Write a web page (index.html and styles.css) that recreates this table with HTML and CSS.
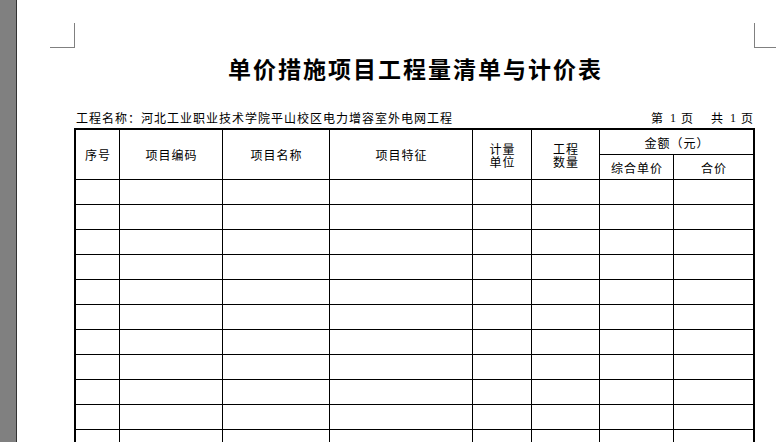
FILE: index.html
```html
<!DOCTYPE html>
<html lang="zh-CN">
<head>
<meta charset="utf-8">
<title>单价措施项目工程量清单与计价表</title>
<link rel="stylesheet" href="styles.css">
</head>
<body>
<div class="app">
  <div class="gutter"></div>
  <div class="page">
    <div class="mark mark-left"></div>
    <div class="mark mark-right"></div>
    <div class="sheet">
      <h1 class="title">单价措施项目工程量清单与计价表</h1>
      <div class="info">
        <span class="project">工程名称：河北工业职业技术学院平山校区电力增容室外电网工程</span>
        <span class="pager">第<span class="num">1</span>页<span class="sp"></span>共<span class="num">1</span>页</span>
      </div>
      <div class="grid">
        <div class="c h span2">序号</div>
        <div class="c h span2">项目编码</div>
        <div class="c h span2">项目名称</div>
        <div class="c h span2">项目特征</div>
        <div class="c h span2 two">计量<br>单位</div>
        <div class="c h span2 two">工程<br>数量</div>
        <div class="c h wide e">金额（元）</div>
        <div class="c h">综合单价</div>
        <div class="c h e">合价</div>

        <div class="c"></div><div class="c"></div><div class="c"></div><div class="c"></div><div class="c"></div><div class="c"></div><div class="c"></div><div class="c e"></div>
        <div class="c"></div><div class="c"></div><div class="c"></div><div class="c"></div><div class="c"></div><div class="c"></div><div class="c"></div><div class="c e"></div>
        <div class="c"></div><div class="c"></div><div class="c"></div><div class="c"></div><div class="c"></div><div class="c"></div><div class="c"></div><div class="c e"></div>
        <div class="c"></div><div class="c"></div><div class="c"></div><div class="c"></div><div class="c"></div><div class="c"></div><div class="c"></div><div class="c e"></div>
        <div class="c"></div><div class="c"></div><div class="c"></div><div class="c"></div><div class="c"></div><div class="c"></div><div class="c"></div><div class="c e"></div>
        <div class="c"></div><div class="c"></div><div class="c"></div><div class="c"></div><div class="c"></div><div class="c"></div><div class="c"></div><div class="c e"></div>
        <div class="c"></div><div class="c"></div><div class="c"></div><div class="c"></div><div class="c"></div><div class="c"></div><div class="c"></div><div class="c e"></div>
        <div class="c"></div><div class="c"></div><div class="c"></div><div class="c"></div><div class="c"></div><div class="c"></div><div class="c"></div><div class="c e"></div>
        <div class="c"></div><div class="c"></div><div class="c"></div><div class="c"></div><div class="c"></div><div class="c"></div><div class="c"></div><div class="c e"></div>
        <div class="c"></div><div class="c"></div><div class="c"></div><div class="c"></div><div class="c"></div><div class="c"></div><div class="c"></div><div class="c e"></div>
        <div class="c"></div><div class="c"></div><div class="c"></div><div class="c"></div><div class="c"></div><div class="c"></div><div class="c"></div><div class="c e"></div>
      </div>
    </div>
  </div>
</div>
</body>
</html>
```
FILE: styles.css
```css
html, body {
  margin: 0;
  padding: 0;
  background: #ffffff;
}
body {
  width: 776px;
  height: 442px;
  overflow: hidden;
  font-family: "Noto Sans CJK SC", "Liberation Sans", sans-serif;
  color: #000;
}
.app {
  display: flex;
  height: 442px;
}
.gutter {
  width: 16px;
  flex: none;
  background: #808080;
  border-right: 1px solid #333333;
}
.page {
  flex: 1;
  position: relative;
  padding-left: 57px;
  background: #fff;
}
.mark {
  position: absolute;
  box-sizing: border-box;
  top: 23px;
  height: 25px;
  border-bottom: 1px solid #808080;
}
.mark-left {
  left: 33px;
  width: 25px;
  border-right: 1px solid #808080;
}
.mark-right {
  left: 737px;
  width: 22px;
  border-left: 1px solid #808080;
}
.sheet {
  width: 681px;
}
.title {
  margin: 53px 0 0 0;
  height: 30px;
  line-height: 30px;
  font-size: 23px;
  font-weight: 700;
  letter-spacing: 2px;
  padding-left: 2px;
  text-align: center;
}
.info {
  display: flex;
  justify-content: space-between;
  margin-top: 28px;
  height: 14px;
  line-height: 14px;
  font-size: 12px;
  padding: 0 2px 0 2px;
  margin-bottom: 3px;
}
.project {
  letter-spacing: 1px;
}
.pager {
  display: flex;
  align-items: center;
}
.num {
  font-family: "Liberation Serif", serif;
  font-size: 12px;
  margin: 0 5px 0 7px;
}
.sp {
  display: inline-block;
  width: 18px;
}
.grid {
  display: grid;
  grid-template-columns: 44px 103px 107px 143px 59px 68px 74px 79px;
  grid-auto-rows: 25px;
  border-top: 2px solid #000;
  border-left: 2px solid #000;
  border-right: 2px solid #000;
}
.c {
  box-sizing: border-box;
  border-right: 1px solid #000;
  border-bottom: 1px solid #000;
  display: flex;
  align-items: center;
  justify-content: center;
  font-size: 12px;
  letter-spacing: 1px;
  padding-left: 1px;
  text-align: center;
}
.c.e {
  border-right: none;
}
.span2 {
  grid-row: span 2;
}
.wide {
  grid-column: span 2;
}
.two {
  line-height: 13px;
}
```
